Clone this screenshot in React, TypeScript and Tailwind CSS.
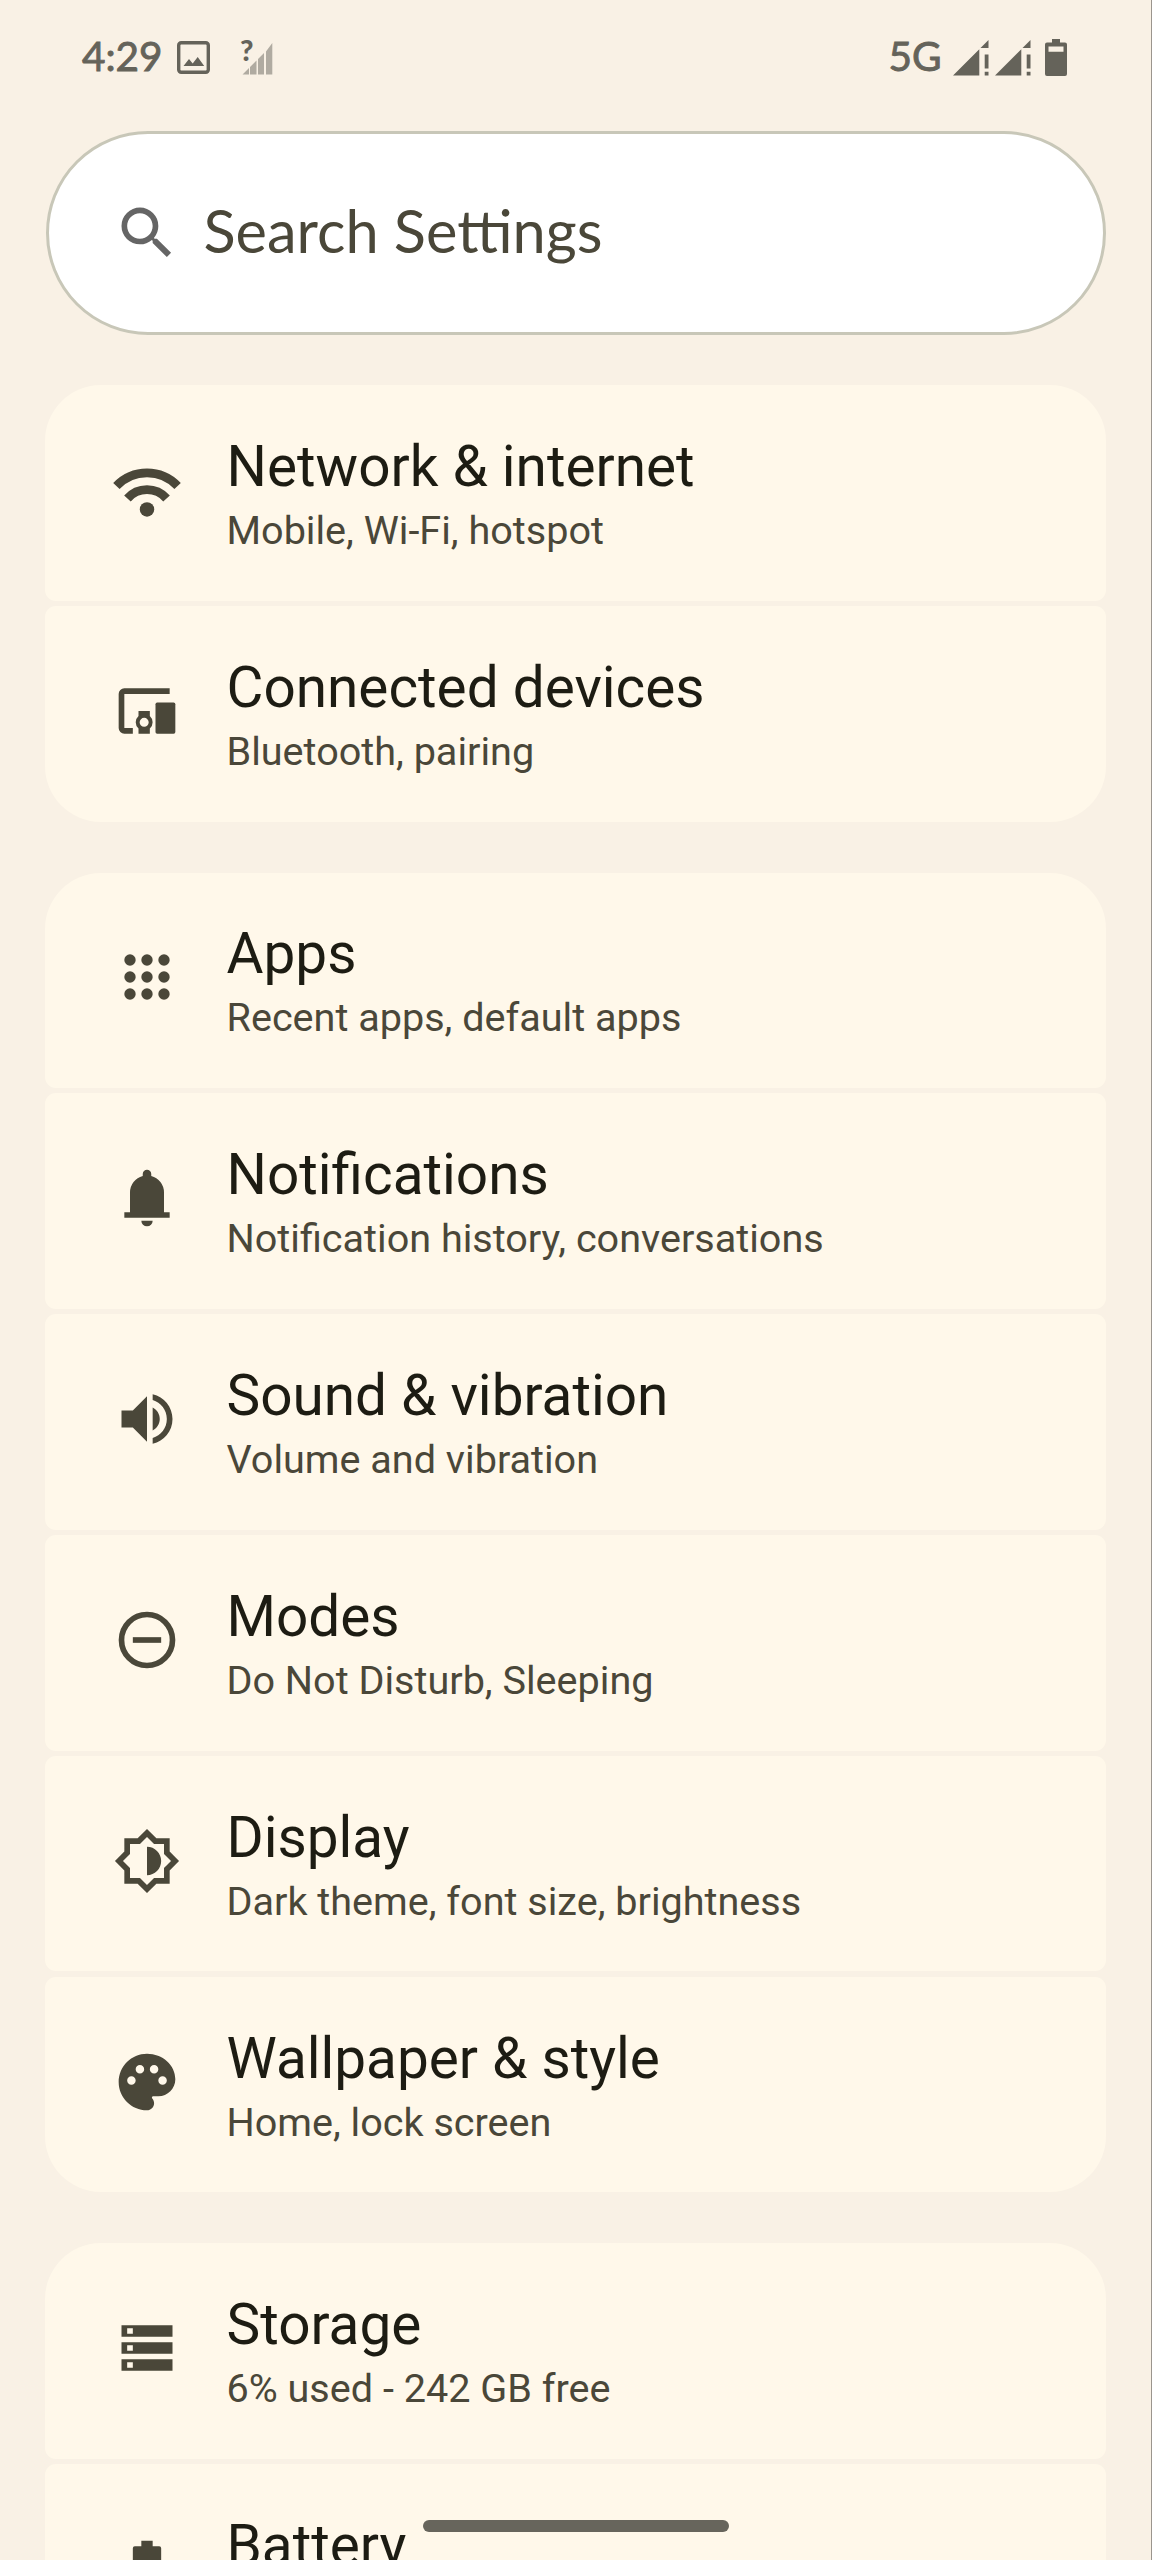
import type { ReactNode } from 'react';

type Item = {
  title: string;
  summary?: string;
  icon: ReactNode;
};

const groups: Item[][] = [
  [
    {
      title: 'Network & internet',
      summary: 'Mobile, Wi-Fi, hotspot',
      icon: (
        <>
          <g fill="none" stroke="currentColor" strokeWidth="3.1">
            <path d="M1.2 10.6A14.87 14.87 0 0 1 22.8 10.6" />
            <path d="M5.1 15A9.2 9.2 0 0 1 18.9 15" />
          </g>
          <circle cx="12" cy="18.85" r="2.55" />
        </>
      ),
    },
    {
      title: 'Connected devices',
      summary: 'Bluetooth, pairing',
      icon: (
        <>
          <path d="M20 4v2H4v12h3v2H4a2 2 0 0 1-2-2V6a2 2 0 0 1 2-2z" />
          <path
            fillRule="evenodd"
            d="M9 12h4v1.78a3 3 0 0 1 0 4.44V20H9v-1.78a3 3 0 0 1 0-4.44zM11 14.4a1.6 1.6 0 1 0 0 3.2 1.6 1.6 0 0 0 0-3.2z"
          />
          <rect x="15" y="9" width="7" height="11" rx=".6" />
        </>
      ),
    },
  ],
  [
    {
      title: 'Apps',
      summary: 'Recent apps, default apps',
      icon: [6, 12, 18].map((cy) => [6, 12, 18].map((cx) => <circle key={`${cx}-${cy}`} cx={cx} cy={cy} r="2" />)),
    },
    {
      title: 'Notifications',
      summary: 'Notification history, conversations',
      icon: (
        <path d="M4 19v-2h2v-7a6 6 0 0 1 4.5-5.8v-.7a1.5 1.5 0 0 1 3 0v.7A6 6 0 0 1 18 10v7h2v2zM12 22a2 2 0 0 1-2-2h4a2 2 0 0 1-2 2z" />
      ),
    },
    {
      title: 'Sound & vibration',
      summary: 'Volume and vibration',
      icon: (
        <path d="M3 9v6h4l5 5V4L7 9H3zm13.5 3c0-1.77-1.02-3.29-2.5-4.03v8.05c1.48-.73 2.5-2.25 2.5-4.02zM14 3.23v2.06c2.89.86 5 3.54 5 6.71s-2.11 5.85-5 6.71v2.06c4.01-.91 7-4.49 7-8.77s-2.99-7.86-7-8.77z" />
      ),
    },
    {
      title: 'Modes',
      summary: 'Do Not Disturb, Sleeping',
      icon: (
        <>
          <circle cx="12" cy="12" r="9" fill="none" stroke="currentColor" strokeWidth="2" />
          <path d="M7 11h10v2H7z" />
        </>
      ),
    },
    {
      title: 'Display',
      summary: 'Dark theme, font size, brightness',
      icon: (
        <path d="M20 8.69V4h-4.69L12 .69 8.69 4H4v4.69L.69 12 4 15.31V20h4.69L12 23.31 15.31 20H20v-4.69L23.31 12 20 8.69zm-2 5.79V18h-3.52L12 20.48 9.52 18H6v-3.52L3.52 12 6 9.52V6h3.52L12 3.52 14.48 6H18v3.52L20.48 12 18 14.48zM12 7v10c2.76 0 5-2.24 5-5s-2.24-5-5-5z" />
      ),
    },
    {
      title: 'Wallpaper & style',
      summary: 'Home, lock screen',
      icon: (
        <path d="M12 2C6.49 2 2 6.49 2 12s4.49 10 10 10c1.38 0 2.5-1.12 2.5-2.5 0-.61-.23-1.2-.64-1.67-.08-.1-.13-.21-.13-.33 0-.28.22-.5.5-.5H16c3.31 0 6-2.69 6-6 0-4.96-4.49-9-10-9zm5.5 11c-.83 0-1.5-.67-1.5-1.5s.67-1.5 1.5-1.5 1.5.67 1.5 1.5-.67 1.5-1.5 1.5zm-3-4c-.83 0-1.5-.67-1.5-1.5S13.67 6 14.5 6s1.5.67 1.5 1.5S15.33 9 14.5 9zM5 11.5c0-.83.67-1.5 1.5-1.5s1.5.67 1.5 1.5S7.33 13 6.5 13 5 12.33 5 11.5zm6-4c0 .83-.67 1.5-1.5 1.5S8 8.33 8 7.5 8.67 6 9.5 6s1.5.67 1.5 1.5z" />
      ),
    },
  ],
  [
    {
      title: 'Storage',
      summary: '6% used - 242 GB free',
      icon: (
        <path
          fillRule="evenodd"
          d="M3 4h18v4H3zM5 5v2h2V5zM3 10h18v4H3zM5 11v2h2v-2zM3 16h18v4H3zM5 17v2h2v-2z"
        />
      ),
    },
    {
      title: 'Battery',
      icon: <path d="M10 2h4v2h2.3a.7.7 0 0 1 .7.7v16.6a.7.7 0 0 1-.7.7H7.7a.7.7 0 0 1-.7-.7V4.7a.7.7 0 0 1 .7-.7H10z" />,
    },
  ],
];

function MobileSignal() {
  return (
    <svg viewBox="0 0 36 36" className="size-9 fill-current">
      <path d="M0 35.5L26.3 9.2V35.5zM27.5 8L35.5 0V8zM31.7 14.5h3.8v14h-3.8zM31.7 31.7h3.8v3.8h-3.8z" />
    </svg>
  );
}

function StatusBar() {
  return (
    <header className="flex h-[115px] items-center justify-between pr-[84px] pl-[82px] font-['Lato',sans-serif] text-[40.5px] text-[#65635a]">
      <div className="flex items-center">
        <span className="mb-[2px] w-[95px] [-webkit-text-stroke:0.9px]">4:29</span>
        <svg viewBox="0 0 33 33" className="size-[33px] fill-current">
          <rect x="1.7" y="1.7" width="29.6" height="29.6" rx="2.5" fill="none" stroke="currentColor" strokeWidth="3.4" />
          <path d="M6.5 25l5.5-7 3.7 4.5L20.700 16l6.5 9z" />
        </svg>
        {/* SIM without service */}
        <div className="relative ml-[31px]">
          <svg viewBox="0 0 32 36" className="h-9 w-8 fill-[#b0aba1]">
            <path d="M1.5 34.5l6.500-6.500v6.500zM9 27l6.500-6.500v14H9zM17 19l6-6v21.500h-6zM25 11.500l6.300-8.500v31.500H25z" />
          </svg>
          <span className="absolute -top-[4px] -left-px text-[29px] leading-7 font-black">?</span>
        </div>
      </div>
      <div className="flex items-center">
        <span className="mr-[11px] mb-[2px] [-webkit-text-stroke:0.9px]">5G</span>
        <div className="flex gap-[6.5px]">
          <MobileSignal />
          <MobileSignal />
        </div>
        <svg viewBox="0 0 22 37" className="ml-[14px] h-[37px] w-[22px] fill-current">
          <path
            fillRule="evenodd"
            d="M7 0h8v3.5h5a2 2 0 0 1 2 2V35a2 2 0 0 1-2 2H2a2 2 0 0 1-2-2V5.500a2 2 0 0 1 2-2h5zM3.500 7.500v5.300h15V7.500z"
          />
        </svg>
      </div>
    </header>
  );
}

function SearchBar() {
  return (
    <div className="mx-[45.5px] mt-4 flex h-[204px] items-center rounded-full border-[3px] border-[#c8c7b8] bg-white pl-[64px]">
      <svg viewBox="0 0 24 24" className="size-[68px] fill-[#656565]">
        <path d="M15.5 14h-.79l-.28-.27A6.471 6.471 0 0 0 16 9.5 6.5 6.5 0 1 0 9.5 16c1.61 0 3.09-.59 4.23-1.57l.27.28v.79l5 4.99L20.49 19l-4.99-5zm-6 0C7.01 14 5 11.99 5 9.5S7.01 5 9.5 5 14 7.01 14 9.5 11.99 14 9.5 14z" />
      </svg>
      <span className="mb-1 ml-[23px] font-['Lato',sans-serif] text-[59.5px] text-[#4a4739]">Search Settings</span>
    </div>
  );
}

function Row({ title, summary, icon }: Item) {
  return (
    <li className="flex h-[215.3px] shrink-0 items-center rounded-[11px] bg-[#fff8ea] pl-[68px] first:rounded-t-[56px] last:rounded-b-[56px]">
      <svg viewBox="0 0 24 24" className="mb-[5.5px] size-[68px] shrink-0 fill-current text-[#4a4739]">
        {icon}
      </svg>
      <div className="ml-[45.5px] whitespace-nowrap">
        <div className="text-[56.7px] leading-[76px] text-[#1d1c13]">{title}</div>
        <div className="h-[52px] text-[39.6px] leading-[51.6px] text-[#4a4739]">{summary}</div>
      </div>
    </li>
  );
}

export default function App() {
  return (
    <div className="relative h-[2560px] overflow-hidden border-r border-[#9b958e] bg-[#f9f1e5] font-['Roboto',sans-serif]">
      <StatusBar />
      <SearchBar />
      <main className="mx-[45px] mt-[50.4px] flex flex-col gap-[51px]">
        {groups.map((items, i) => (
          <ul key={i} className="flex flex-col gap-[5.6px]">
            {items.map((item) => (
              <Row key={item.title} {...item} />
            ))}
          </ul>
        ))}
      </main>
      {/* gesture handle */}
      <div className="absolute bottom-7 left-[423px] h-3 w-[306px] rounded-full bg-[#67655c]" />
    </div>
  );
}
